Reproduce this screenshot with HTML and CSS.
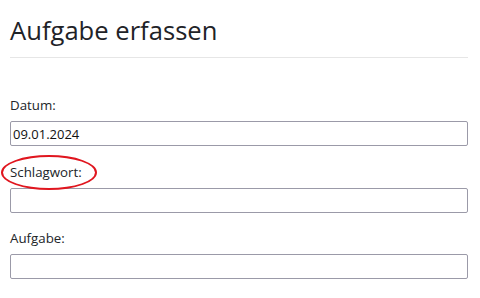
FILE: index.html
```html
<!DOCTYPE html>
<html lang="de">
<head>
<meta charset="utf-8">
<title>Aufgabe erfassen</title>
<link rel="stylesheet" href="styles.css">
</head>
<body>
<main class="page">
  <h1 class="title">Aufgabe erfassen</h1>
  <hr class="rule">
  <form class="form">
    <div class="field">
      <label class="label" for="datum">Datum:</label>
      <input class="input" id="datum" type="text" value="09.01.2024">
    </div>
    <div class="field field-marked">
      <label class="label" for="schlagwort">Schlagwort:</label>
      <input class="input" id="schlagwort" type="text">
      <span class="marker" aria-hidden="true"></span>
    </div>
    <div class="field">
      <label class="label" for="aufgabe">Aufgabe:</label>
      <input class="input" id="aufgabe" type="text">
    </div>
  </form>
</main>
</body>
</html>
```
FILE: styles.css
```css
html, body {
  margin: 0;
  padding: 0;
  background: #ffffff;
}
body {
  font-family: "Open Sans", "Noto Sans", "Liberation Sans", sans-serif;
  color: #212529;
}
.page {
  padding: 0 12px 0 10px;
  width: 480px;
  box-sizing: border-box;
}
.title {
  margin: 0;
  padding-top: 15px;
  font-size: 25.6px;
  font-weight: 400;
  line-height: 32px;
  color: #1f2328;
}
.rule {
  margin: 10px 0 0 0;
  border: 0;
  border-top: 1px solid #e6e6e6;
  height: 0;
}
.form {
  display: flex;
  flex-direction: column;
  gap: 15.5px;
  padding-top: 37px;
}
.field {
  display: flex;
  flex-direction: column;
  gap: 6px;
  position: relative;
}
.label {
  font-size: 13.3px;
  line-height: 20px;
  color: #212529;
}
.input {
  box-sizing: border-box;
  height: 25px;
  width: 100%;
  margin: 0;
  padding: 0 2px;
  border: 1px solid #9b9aa8;
  border-radius: 2px;
  font-family: inherit;
  font-size: 13px;
  color: #111;
  background: #fff;
}
.marker {
  position: absolute;
  left: -9px;
  top: -7px;
  width: 96px;
  height: 35px;
  border: 2px solid #e0161f;
  border-radius: 50%;
  box-sizing: border-box;
}
```
